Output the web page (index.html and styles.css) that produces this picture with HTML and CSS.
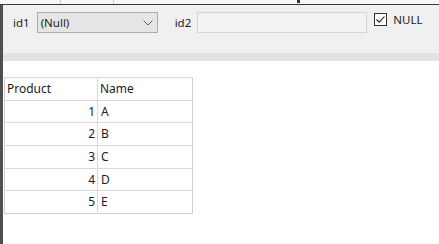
FILE: index.html
```html
<!DOCTYPE html>
<html>
<head>
<meta charset="utf-8">
<link rel="stylesheet" href="styles.css">
</head>
<body>
<div class="tabs">
  <div class="tab t1"></div>
  <div class="tab t2"></div>
  <div class="tab t3"><span class="mark"></span></div>
</div>
<div class="topline"></div>
<div class="app">
  <div class="edge"></div>
  <div class="main">
    <div class="toolbar">
      <span class="lbl">id1</span>
      <div class="select">
        <span>(Null)</span>
        <svg class="chev" width="10" height="6" viewBox="0 0 10 6"><path d="M0.5 0.5 L5 5 L9.5 0.5" fill="none" stroke="#5a5a5a" stroke-width="1"/></svg>
      </div>
      <span class="lbl lbl2">id2</span>
      <div class="input"></div>
      <label class="chk">
        <svg class="box" width="13" height="13" viewBox="0 0 13 13"><rect x="0.5" y="0.5" width="12" height="12" fill="#fbfbfb" stroke="#333"/><path d="M2.5 6.5 L5.2 9.2 L10.5 3.5" fill="none" stroke="#222" stroke-width="1.1"/></svg>
        <span>NULL</span>
      </label>
    </div>
    <div class="band"></div>
    <div class="content">
      <table class="grid">
        <thead>
          <tr><th>Product</th><th>Name</th></tr>
        </thead>
        <tbody>
          <tr><td class="num">1</td><td>A</td></tr>
          <tr><td class="num">2</td><td>B</td></tr>
          <tr><td class="num">3</td><td>C</td></tr>
          <tr><td class="num">4</td><td>D</td></tr>
          <tr><td class="num">5</td><td>E</td></tr>
        </tbody>
      </table>
    </div>
  </div>
</div>
</body>
</html>
```
FILE: styles.css
```css
html, body {
  margin: 0;
  padding: 0;
  background: #ffffff;
  font-family: "Noto Sans", "Open Sans", sans-serif;
  color: #1c1c1c;
}
.tabs {
  height: 4px;
  display: flex;
  background: #f7f7f7;
}
.tab {
  height: 4px;
  border-right: 1px solid #cfcfcf;
  box-sizing: border-box;
}
.t1 { width: 61px; }
.t2 { width: 53px; }
.t3 { width: 190px; border-right: none; display: flex; justify-content: flex-end; }
.mark {
  display: block;
  width: 3px;
  height: 3px;
  background: #333;
  margin-right: 4px;
}
.topline {
  height: 1px;
  background: #3a3a3a;
}
.app {
  display: flex;
  height: 239px;
}
.edge {
  width: 3px;
  background: #4f4f4f;
  flex: none;
}
.main {
  flex: 1;
  display: flex;
  flex-direction: column;
}
.toolbar {
  height: 48px;
  box-sizing: border-box;
  background: #f0f0f0;
  display: flex;
  align-items: flex-start;
  padding: 7px 0 0 10px;
  font-size: 11.5px;
}
.lbl {
  height: 21px;
  line-height: 21px;
  margin-right: 7px;
}
.lbl2 {
  margin-right: 6px;
}
.select {
  width: 121px;
  height: 21px;
  box-sizing: border-box;
  border: 1px solid #adadad;
  background: #e5e5e5;
  display: flex;
  align-items: center;
  justify-content: space-between;
  padding: 0 4px 0 3px;
  margin-right: 17px;
  line-height: 19px;
}
.chev {
  display: block;
  margin-right: 0;
}
.input {
  width: 170px;
  height: 21px;
  box-sizing: border-box;
  border: 1px solid #d4d4d4;
  background: #f2f2f2;
  margin-right: 7px;
}
.chk {
  display: flex;
  align-items: center;
  height: 13px;
  margin-top: 1px;
  gap: 6px;
}
.box { display: block; }
.band {
  height: 8px;
  background: #e3e3e3;
}
.content {
  flex: 1;
  padding: 16px 0 0 1px;
}
.grid {
  border-collapse: collapse;
  font-size: 12px;
  border: 1px solid #cfcfcf;
}
.grid th, .grid td {
  padding: 0 2px;
  height: 22.7px;
  box-sizing: border-box;
  border-top: 1px solid #d9d9d9;
  font-weight: normal;
  text-align: left;
  line-height: 16px;
}
.grid th:first-child, .grid td:first-child {
  width: 93px;
  border-right: 1px solid #d9d9d9;
}
.grid th:last-child, .grid td:last-child {
  width: 95px;
}
.grid td.num {
  text-align: right;
  padding-right: 2px;
}
.grid td:last-child {
  padding-left: 3px;
}
```
